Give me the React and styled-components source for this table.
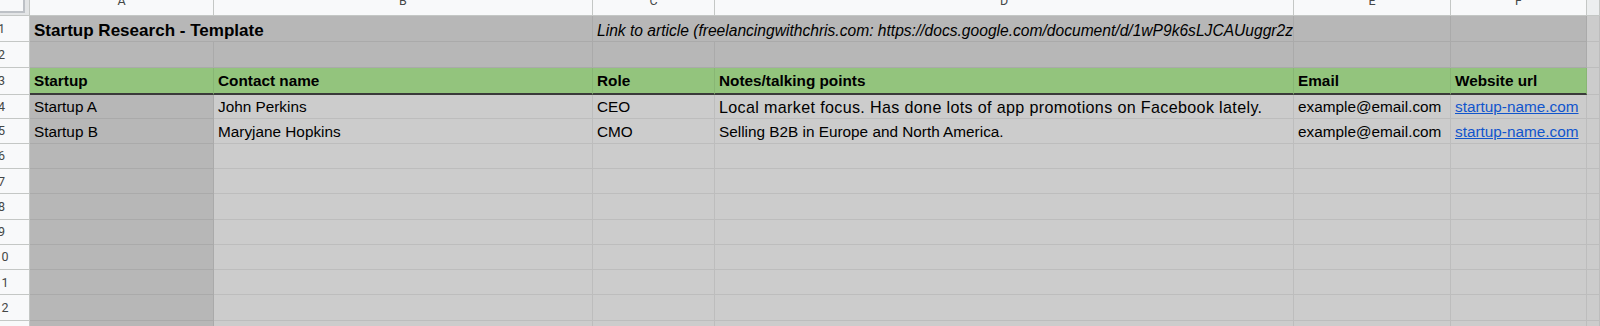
import React from "react";
import styled, { createGlobalStyle } from "styled-components";

const GlobalStyle = createGlobalStyle`
  html, body {
    margin: 0;
    padding: 0;
    background: #cccccc;
    overflow: hidden;
  }
`;

const COLS = ["A", "B", "C", "D", "E", "F"];

const rows = [
  { n: 4, wide: true, cells: ["Startup A", "John Perkins", "CEO", "Local market focus. Has done lots of app promotions on Facebook lately.", "example@email.com", "startup-name.com"] },
  { n: 5, cells: ["Startup B", "Maryjane Hopkins", "CMO", "Selling B2B in Europe and North America.", "example@email.com", "startup-name.com"] },
];

const emptyRows = [6, 7, 8, 9, 10, 11, 12, 13];

function App() {
  return (
    <>
      <GlobalStyle />
      <Sheet>
        <Corner>
          <CornerBox />
        </Corner>
        {COLS.map((c) => (
          <ColHead key={c}>
            <Letter>{c}</Letter>
          </ColHead>
        ))}
        <ColHead $rest />

        {/* row 1 */}
        <RowHead>
          <Num>
            <span>1</span>
          </Num>
        </RowHead>
        <Cell $bg="#b7b7b7" $span={2} $size="17.04px" $bold $pb={1}>
          Startup Research - Template
        </Cell>
        <Cell $bg="#b7b7b7" $span={2} $size="15.6px" $italic $pb={1}>
          Link to article (freelancingwithchris.com: https://docs.google.com/document/d/1wP9k6sLJCAUuggr2z
        </Cell>
        <Cell $bg="#b7b7b7" />
        <Cell $bg="#b7b7b7" />
        <Cell />

        {/* row 2 */}
        <RowHead>
          <Num>
            <span>2</span>
          </Num>
        </RowHead>
        {COLS.map((c) => (
          <Cell key={c} $bg="#b7b7b7" />
        ))}
        <Cell />

        {/* row 3 headers */}
        <RowHead>
          <Num>
            <span>3</span>
          </Num>
        </RowHead>
        {["Startup", "Contact name", "Role", "Notes/talking points", "Email", "Website url"].map((h) => (
          <HeadCell key={h}>{h}</HeadCell>
        ))}
        <Cell />

        {rows.map((r) => (
          <React.Fragment key={r.n}>
            <RowHead>
              <Num>
                <span>{r.n}</span>
              </Num>
            </RowHead>
            {r.cells.map((v, i) => (
              <Cell
                key={i}
                $bg={i === 0 ? "#b7b7b7" : "#cccccc"}
                $size={r.wide && i === 3 ? "16.1px" : undefined}
                $spacing={r.wide && i === 3 ? 0.35 : 0}
              >
                {i === 5 ? <Link>{v}</Link> : v}
              </Cell>
            ))}
            <Cell />
          </React.Fragment>
        ))}

        {emptyRows.map((n) => (
          <React.Fragment key={n}>
            <RowHead>
              <Num>
                <span>{n}</span>
              </Num>
            </RowHead>
            {COLS.map((c, i) => (
              <Cell key={c} $bg={i === 0 ? "#b7b7b7" : "#cccccc"} />
            ))}
            <Cell />
          </React.Fragment>
        ))}
      </Sheet>
    </>
  );
}

const Sheet = styled.div`
  display: grid;
  width: 1600px;
  height: 326px;
  overflow: hidden;
  grid-template-columns: 30px 184px 379px 122px 579px 157px 136px 1fr;
  grid-template-rows: 16px 26px 25.5px 27px 24px repeat(9, 25.25px);
  font-family: "Liberation Sans", Arial, sans-serif;
  font-size: 15.33px;
  color: #000;
`;

const Corner = styled.div`
  background: #e3e5e6;
  border-right: 1px solid #c4c7c5;
  border-bottom: 1px solid #c4c7c5;
  box-sizing: border-box;
`;

const CornerBox = styled.div`
  width: 25px;
  height: 13px;
  box-sizing: border-box;
  background: #f8f9fa;
  border-right: 2px solid #bdc1c6;
  border-bottom: 2px solid #bdc1c6;
`;

const ColHead = styled.div`
  display: flex;
  justify-content: center;
  overflow: hidden;
  box-sizing: border-box;
  background: ${(p) => (p.$rest ? "#eceeef" : "#f8f9fa")};
  border-right: 1px solid #c4c7c5;
  border-bottom: 1px solid #c4c7c5;
  font-family: Roboto, "Liberation Sans", sans-serif;
  font-size: 12.5px;
  color: #444746;
`;

const Letter = styled.span`
  display: block;
  line-height: 12px;
  margin-top: -5px;
`;

const RowHead = styled.div`
  display: flex;
  align-items: center;
  overflow: hidden;
  box-sizing: border-box;
  background: #f8f9fa;
  border-right: 1px solid #c4c7c5;
  border-bottom: 1px solid #c4c7c5;
  font-family: Roboto, "Liberation Sans", sans-serif;
  font-size: 12.5px;
  color: #444746;
`;

const Num = styled.div`
  display: flex;
  justify-content: center;
  width: 3px;
  flex: none;
  white-space: nowrap;
`;

const Cell = styled.div`
  grid-column: span ${(p) => p.$span || 1};
  display: flex;
  align-items: flex-end;
  box-sizing: border-box;
  overflow: hidden;
  white-space: nowrap;
  padding: 0 3px ${(p) => (p.$pb ?? 2)}px 4px;
  background: ${(p) => p.$bg || "#cccccc"};
  border-right: 1px solid rgba(0, 0, 0, 0.07);
  border-bottom: 1px solid rgba(0, 0, 0, 0.07);
  font-size: ${(p) => p.$size || "15.33px"};
  font-weight: ${(p) => (p.$bold ? 700 : 400)};
  font-style: ${(p) => (p.$italic ? "italic" : "normal")};
  letter-spacing: ${(p) => p.$spacing || 0}px;
  line-height: 18px;
`;

const HeadCell = styled(Cell)`
  background: #93c47d;
  font-weight: 700;
  border-bottom: 2px solid #3a3a3a;
  padding-bottom: 3px;
`;

const Link = styled.span`
  color: #1155cc;
  text-decoration: underline;
`;

export default App;
